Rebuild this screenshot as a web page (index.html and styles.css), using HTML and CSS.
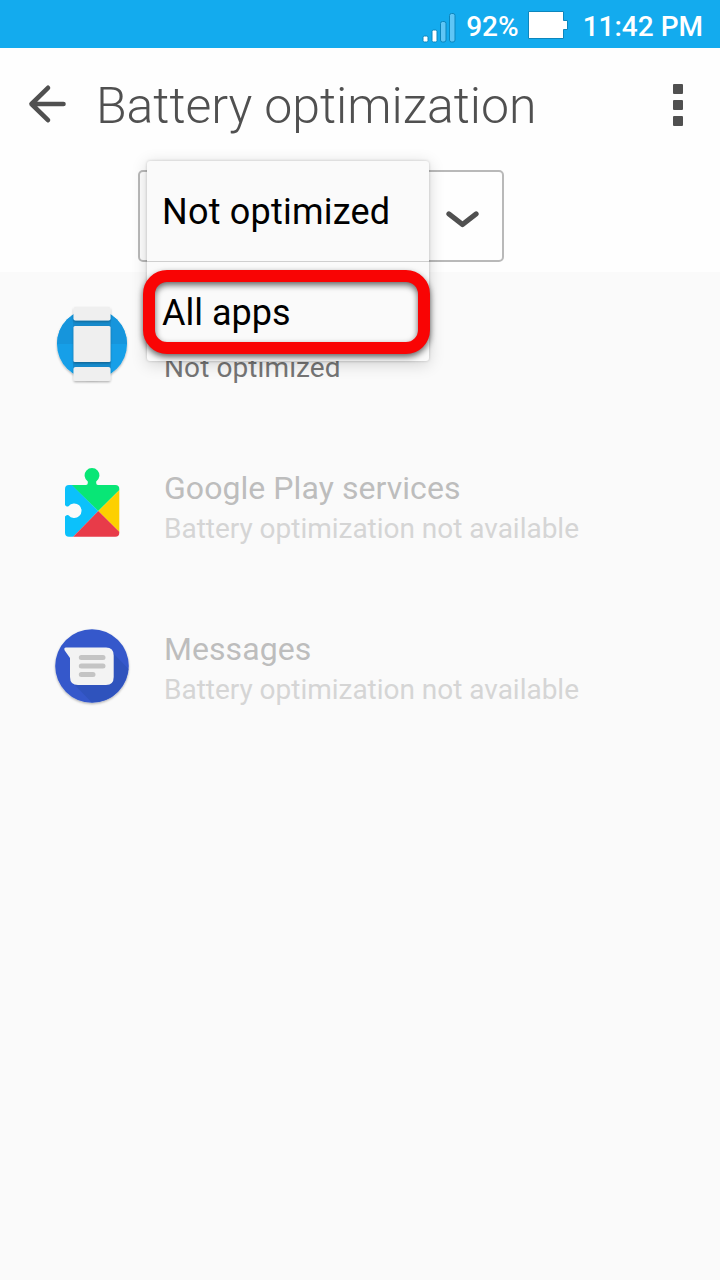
FILE: index.html
```html
<!DOCTYPE html>
<html lang="en">
<head>
<meta charset="utf-8">
<title>Battery optimization</title>
<link rel="stylesheet" href="styles.css">
</head>
<body>
<div class="status">
  <svg class="signal" width="36" height="32" viewBox="0 0 36 32">
    <g stroke="#0c86bd" stroke-width="1">
      <rect x="1" y="24" width="5" height="6" rx="1.500" fill="#fff"/>
      <rect x="10" y="18" width="5" height="12" rx="1.500" fill="#fff"/>
      <rect x="18.500" y="9.500" width="5.500" height="20.500" rx="2" fill="#5fc6f6"/>
      <rect x="27.500" y="1.500" width="5.500" height="28.500" rx="2" fill="#5fc6f6"/>
    </g>
  </svg>
  <span class="percent">92%</span>
  <svg class="battery" width="40" height="28" viewBox="0 0 40 28">
    <path d="M.5.5H35.500V9.500H39.500V18.500H35.500V27.500H.5Z" fill="#fff" stroke="#0c86bd"/>
  </svg>
  <span class="clock">11:42 PM</span>
</div>
<header class="bar">
  <svg class="back" width="40" height="40" viewBox="0 0 40 40" fill="none" stroke="#505050" stroke-width="4.600" stroke-linecap="round" stroke-linejoin="round">
    <path d="M35.500 20H3.500M20 3.800 3.500 20 20 36.200"/>
  </svg>
  <h1 class="heading">Battery optimization</h1>
  <svg class="more" width="10" height="42" viewBox="0 0 10 42" fill="#505050">
    <rect width="10" height="10" rx="1"/><rect y="16" width="10" height="10" rx="1"/><rect y="32" width="10" height="10" rx="1"/>
  </svg>
</header>
<section class="filter">
  <div class="select">
    <svg class="chevron" width="34" height="20" viewBox="0 0 34 20" fill="none" stroke="#505050" stroke-width="5.300" stroke-linecap="round" stroke-linejoin="round"><path d="M4 4 17.500 14.500 31 4"/></svg>
    <div class="menu">
      <div class="option">Not optimized</div>
      <div class="option last">All apps</div>
      <div class="highlight"></div>
    </div>
  </div>
</section>
<main class="list">
  <div class="row">
    <svg class="icon" width="80" height="84" viewBox="0 0 80 84">
      <defs>
        <clipPath id="face"><circle cx="40" cy="42" r="35"/></clipPath>
        <filter id="soft" x="-20%" y="-20%" width="140%" height="140%"><feDropShadow dx="0" dy="1.200" stdDeviation="1" flood-opacity=".3"/></filter>
      </defs>
      <circle cx="40" cy="42" r="35" fill="#129fe8" filter="url(#soft)"/>
      <rect width="80" height="42" fill="#1695dc" clip-path="url(#face)"/>
      <path d="M21 18H59V66H21Z" fill="#168bcd"/>
      <g fill="#efefef" filter="url(#soft)">
        <rect x="21.500" y="5" width="37" height="13.500" rx="2"/>
        <rect x="21.500" y="24" width="37" height="36" rx="1.500"/>
        <rect x="21.500" y="65" width="37" height="14" rx="2"/>
      </g>
    </svg>
    <div class="text"><div class="name"></div><div class="note active">Not optimized</div></div>
  </div>
  <div class="row">
    <svg class="icon" width="80" height="84" viewBox="0 0 80 84">
      <defs><clipPath id="puzzle"><path d="M17 22H34Q35.800 22 35.800 20V18.500A7.400 7.400 0 1 1 44.200 18.500V20Q44.200 22 46 22H63.300Q67.300 22 67.300 26V69.700Q67.300 73.700 63.300 73.700H17Q13 73.700 13 69.700V53.500Q14.500 51.200 16.500 52.200A7.300 7.300 0 1 0 16.500 43.200Q14.500 44.200 13 42V26Q13 22 17 22Z"/></clipPath></defs>
      <g clip-path="url(#puzzle)">
        <path d="M12 21H19.500L46.300 48 20 75H12Z" fill="#0bc1fb"/>
        <path d="M19.800 22 30 0H55L68 22V26.500L46.300 48Z" fill="#08e676"/>
        <path d="M68 26.500V69.500L46.300 48Z" fill="#fdd000"/>
        <path d="M46.300 48 68 69.500V76H19Z" fill="#e83b49"/>
      </g>
    </svg>
    <div class="text"><div class="name">Google Play services</div><div class="note">Battery optimization not available</div></div>
  </div>
  <div class="row">
    <svg class="icon" width="80" height="84" viewBox="0 0 80 84">
      <circle cx="40" cy="42" r="36.800" fill="#3559cb" filter="url(#soft)"/>
      <path d="M20 58 39.500 78.300Q53 78.300 62 71 74 61 76.500 45L60 28 54 58Z" fill="#2f53bd"/>
      <path d="M14 23.500H54Q61.700 23.500 61.700 31.500V53Q61.700 61 54 61H26Q18 61 18 53V34L12.700 26.500Q11.500 23.500 14 23.500Z" fill="#f3f3f3"/>
      <path d="M29.300 33.500H51M29.300 42H51M29.300 50.500H41" stroke="#c4c4c4" stroke-width="5" stroke-linecap="round"/>
    </svg>
    <div class="text"><div class="name">Messages</div><div class="note">Battery optimization not available</div></div>
  </div>
</main>
</body>
</html>
```

FILE: styles.css
```css
body {
  margin: 0;
  min-height: 1280px;
  background: #fafafa;
  font-family: Roboto, sans-serif;
}

svg {
  display: block;
  flex: none;
}

.status {
  display: flex;
  align-items: center;
  justify-content: flex-end;
  height: 48px;
  padding-right: 17px;
  box-sizing: border-box;
  background: #13abee;
  color: #fff;
  font-size: 28px;
  font-weight: 500;
  line-height: 48px;
  white-space: nowrap;
}

.signal {
  margin: 7px 8px 0 0;
}

.percent {
  padding-top: 5px;
}

.battery {
  margin: 2px 15px 0 9px;
}

.clock {
  padding-top: 5px;
}

.bar {
  display: flex;
  align-items: center;
  height: 112px;
  padding: 0 37px 0 28px;
  box-sizing: border-box;
  background: #fefefe;
}

.heading {
  flex: 1;
  margin: 4px 0 0 28px;
  color: #505050;
  font-size: 50px;
  font-weight: 300;
  letter-spacing: -0.05px;
  line-height: 60px;
  white-space: nowrap;
}

.more {
  margin-top: 2px;
}

.filter {
  height: 112px;
  padding: 10px 0 0 138px;
  box-sizing: border-box;
  background: #fefefe;
}

.select {
  position: relative;
  display: flex;
  align-items: center;
  justify-content: flex-end;
  width: 366px;
  height: 92px;
  padding-right: 23px;
  box-sizing: border-box;
  border: 2px solid #b9b9b9;
  border-radius: 5px;
}

.chevron {
  margin-top: 7px;
}

.menu {
  position: absolute;
  z-index: 2;
  top: -11px;
  left: 7px;
  width: 282px;
  height: 200px;
  border-radius: 3px;
  background: #fafafa;
  box-shadow: 0 3px 16px rgba(0, 0, 0, .17), 0 0 3px rgba(0, 0, 0, .2);
  color: #000;
  font-size: 36px;
}

.option {
  height: 100px;
  padding-left: 15px;
  box-sizing: border-box;
  letter-spacing: .22px;
  line-height: 102px;
}

.option.last {
  border-top: 1px solid #cfcfcf;
  letter-spacing: 0;
}

.highlight {
  position: absolute;
  top: 109px;
  left: -4px;
  width: 287px;
  height: 84px;
  box-sizing: border-box;
  border: 12px solid #f90404;
  border-radius: 24px;
  filter: drop-shadow(0 3px 3px rgba(0, 0, 0, .6));
}

.list {
  display: flex;
  flex-direction: column;
  gap: 17px;
}

.row {
  display: flex;
  align-items: center;
  height: 144px;
  padding-left: 52px;
}

.text {
  padding-top: 7px;
  margin-left: 32px;
  white-space: nowrap;
}

.name {
  height: 40px;
  color: #bdbdbd;
  font-size: 32px;
  letter-spacing: .06px;
  line-height: 38px;
}

.note {
  color: #d5d5d5;
  font-size: 28px;
  letter-spacing: -0.02px;
  line-height: 40px;
}

.note.active {
  color: #757575;
  letter-spacing: .1px;
}
```
